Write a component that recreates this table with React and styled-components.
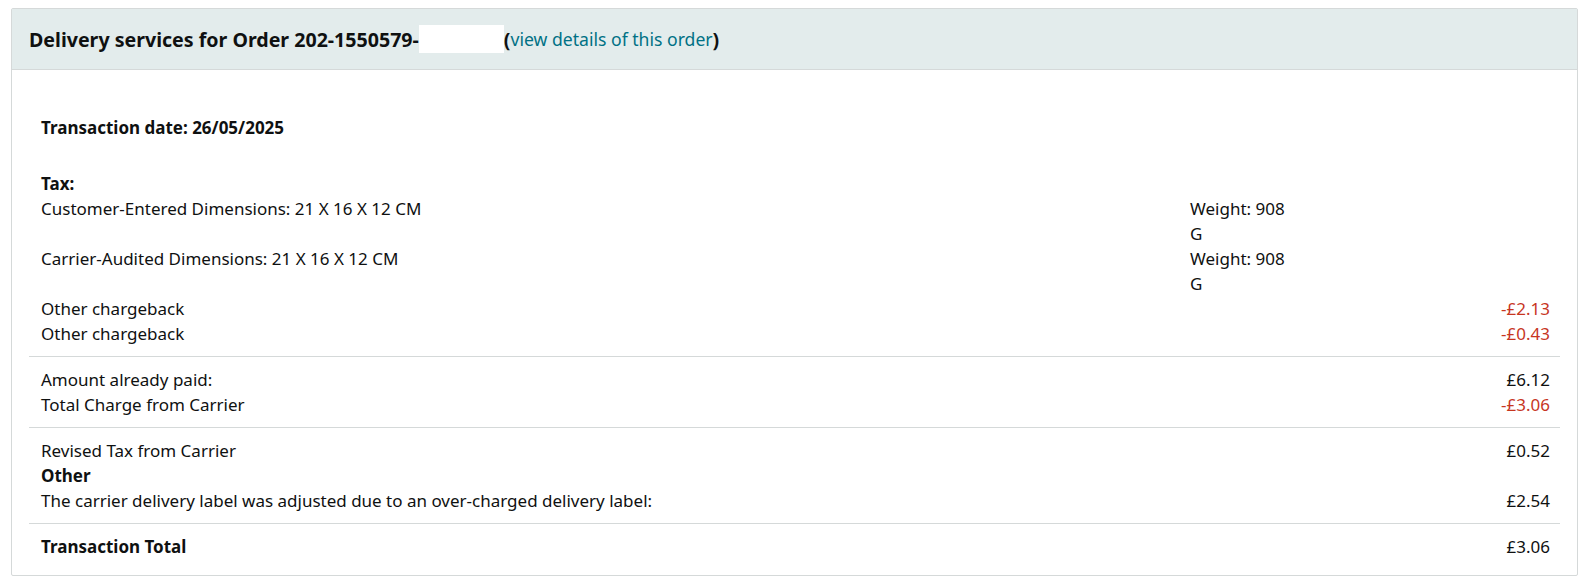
import React from 'react';
import styled, { createGlobalStyle } from 'styled-components';

const GlobalStyle = createGlobalStyle`
  body {
    margin: 0;
    background: #fff;
    font-family: "Noto Sans", "Open Sans", Arial, sans-serif;
    color: #0f1111;
  }
`;

const Page = styled.div`
  padding: 8px 13px 12px 11px;
`;

const Box = styled.div`
  border: 1px solid #d5d9d9;
  border-radius: 2px;
`;

const Header = styled.div`
  background: #e3ecec;
  border-bottom: 1px solid #d5d9d9;
  height: 60px;
  display: flex;
  align-items: center;
  padding-left: 17px;
  font-size: 19.6px;
  font-weight: 700;
  color: #0f1111;
`;

const Masked = styled.span`
  display: inline-block;
  width: 85px;
  height: 28px;
  background: #fff;
  vertical-align: middle;
`;

const Link = styled.a`
  color: #007185;
  font-size: 17.6px;
  font-weight: 400;
  text-decoration: none;
`;

const Body = styled.div`
  padding: 45px 17px 6px 17px;
  font-size: 17px;
  line-height: 25px;
`;

const Section = styled.div`
  padding: ${p => (p.first ? '0 10px 10px 12px' : '10px 10px 10px 12px')};
  border-top: ${p => (p.first ? 'none' : '1px solid #d5d9d9')};
`;

const DateLine = styled.div`
  font-weight: 700;
  margin-bottom: 31px;
`;

const Row = styled.div`
  display: grid;
  grid-template-columns: 1fr 104px 256px;
`;

const Label = styled.div`
  font-weight: ${p => (p.bold ? 700 : 400)};
`;

const Weight = styled.div``;

const Amount = styled.div`
  text-align: right;
  color: ${p => (p.negative ? '#c7361f' : '#0f1111')};
`;

function Line({ label, bold, weight, amount }) {
  const negative = amount && amount.startsWith('-');
  return (
    <Row>
      <Label bold={bold}>{label}</Label>
      <Weight>{weight}</Weight>
      <Amount negative={negative}>{amount}</Amount>
    </Row>
  );
}

export default function App() {
  return (
    <>
      <GlobalStyle />
      <Page>
        <Box>
          <Header>
            Delivery services for Order 202-1550579-<Masked />(
            <Link href="#">view details of this order</Link>)
          </Header>
          <Body>
            <Section first>
              <DateLine>Transaction date: 26/05/2025</DateLine>
              <Line label="Tax:" bold />
              <Line label="Customer-Entered Dimensions: 21 X 16 X 12 CM" weight="Weight: 908 G" />
              <Line label="Carrier-Audited Dimensions: 21 X 16 X 12 CM" weight="Weight: 908 G" />
              <Line label="Other chargeback" amount="-£2.13" />
              <Line label="Other chargeback" amount="-£0.43" />
            </Section>
            <Section>
              <Line label="Amount already paid:" amount="£6.12" />
              <Line label="Total Charge from Carrier" amount="-£3.06" />
            </Section>
            <Section>
              <Line label="Revised Tax from Carrier" amount="£0.52" />
              <Line label="Other" bold />
              <Line
                label="The carrier delivery label was adjusted due to an over-charged delivery label:"
                amount="£2.54"
              />
            </Section>
            <Section>
              <Line label="Transaction Total" bold amount="£3.06" />
            </Section>
          </Body>
        </Box>
      </Page>
    </>
  );
}
